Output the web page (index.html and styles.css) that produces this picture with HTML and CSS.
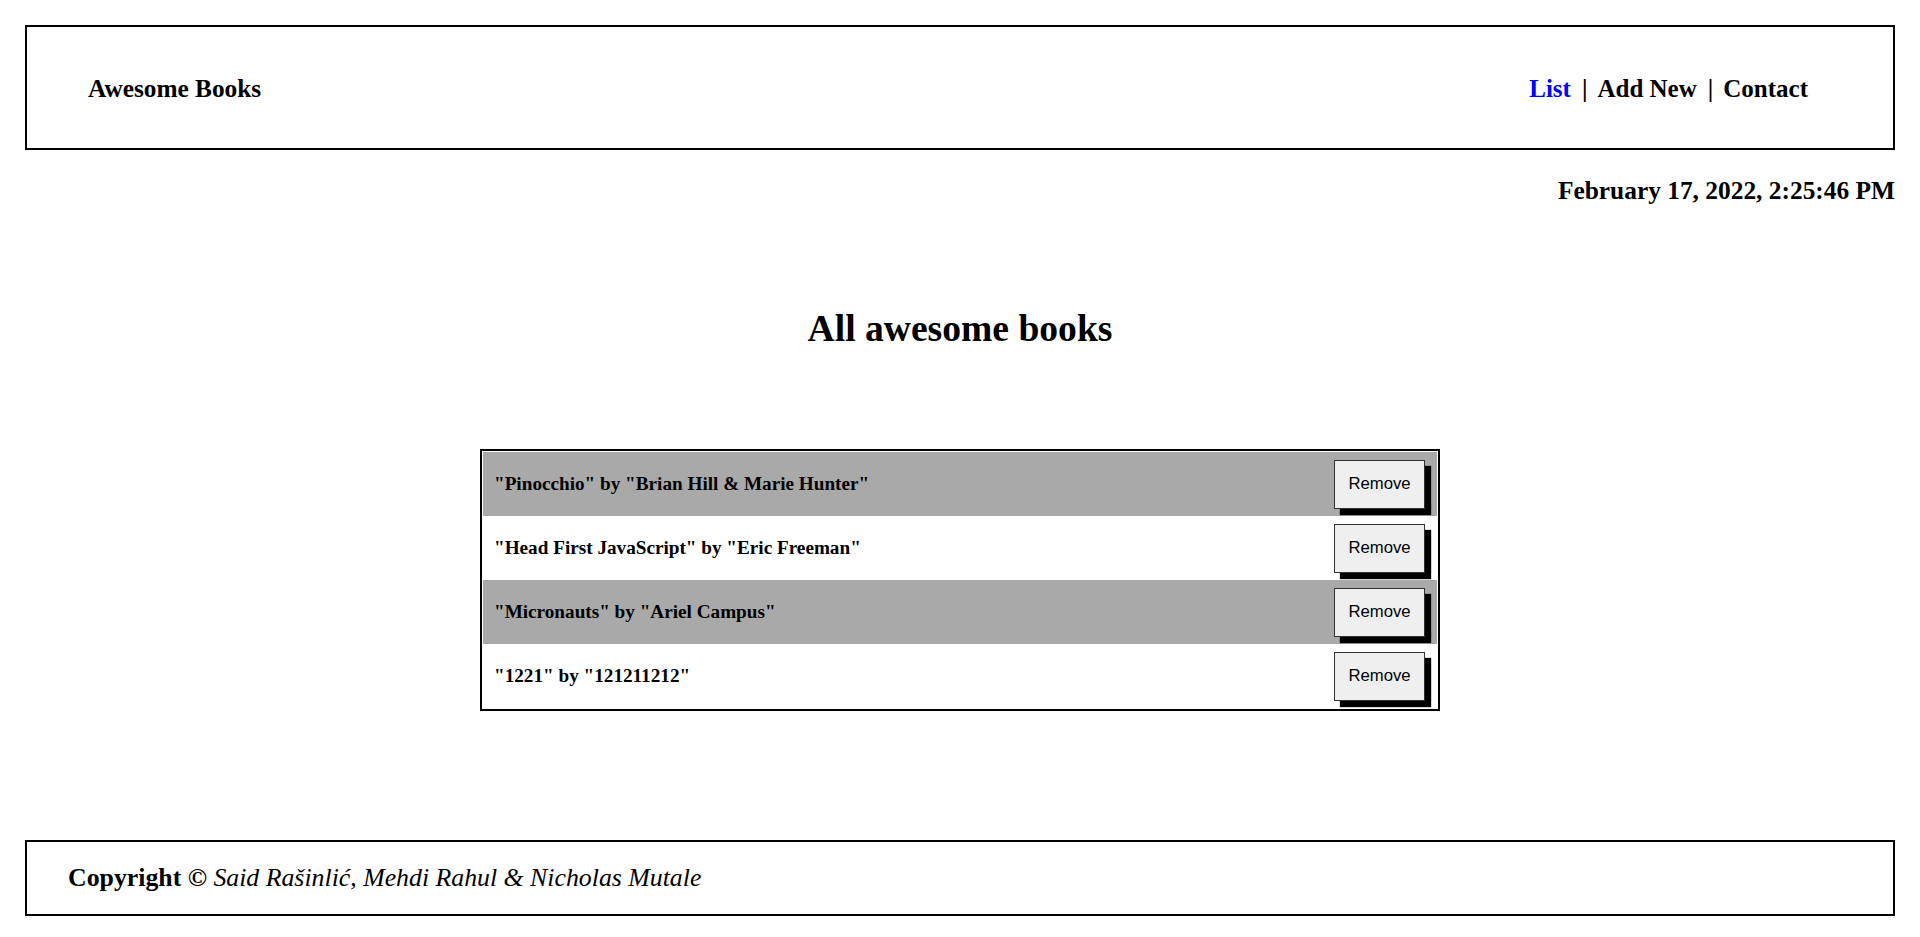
FILE: index.html
```html
<!DOCTYPE html>
<html lang="en">
<head>
<meta charset="utf-8">
<title>Awesome Books</title>
<link rel="stylesheet" href="styles.css">
</head>
<body>
<header class="top-bar">
  <div class="brand">Awesome Books</div>
  <nav class="nav">
    <a class="nav-link active" href="#">List</a>
    <span class="sep">|</span>
    <a class="nav-link" href="#">Add New</a>
    <span class="sep">|</span>
    <a class="nav-link" href="#">Contact</a>
  </nav>
</header>
<p class="date">February 17, 2022, 2:25:46 PM</p>
<main>
  <h1 class="title">All awesome books</h1>
  <ul class="book-list">
    <li class="book odd"><span class="book-text">"Pinocchio" by "Brian Hill &amp; Marie Hunter"</span><button class="remove">Remove</button></li>
    <li class="book"><span class="book-text">"Head First JavaScript" by "Eric Freeman"</span><button class="remove">Remove</button></li>
    <li class="book odd"><span class="book-text">"Micronauts" by "Ariel Campus"</span><button class="remove">Remove</button></li>
    <li class="book"><span class="book-text">"1221" by "121211212"</span><button class="remove">Remove</button></li>
  </ul>
</main>
<footer class="footer">
  <p class="copy"><strong>Copyright ©</strong> <em>Said Rašinlić, Mehdi Rahul &amp; Nicholas Mutale</em></p>
</footer>
</body>
</html>
```
FILE: styles.css
```css
* {
  box-sizing: border-box;
}

body {
  margin: 0;
  padding: 25px 25px 0;
  font-family: "Liberation Serif", "Times New Roman", serif;
  color: #000;
  background: #fff;
}

.top-bar {
  display: flex;
  justify-content: space-between;
  align-items: center;
  border: 2px solid #000;
  padding: 47px 85px 45px 61px;
  font-size: 25px;
  font-weight: bold;
  line-height: normal;
}

.brand {
  font-size: 25.3px;
}

.nav {
  display: flex;
  align-items: baseline;
}

.nav-link {
  color: #000;
  text-decoration: none;
}

.nav-link.active {
  color: #0000ff;
}

.sep {
  margin: 0 10px 0 11px;
}

.date {
  margin: 26px 0 0;
  text-align: right;
  font-size: 25.4px;
  font-weight: bold;
  line-height: normal;
}

.title {
  margin: 102px 0 0;
  text-align: center;
  font-size: 37.6px;
  font-weight: bold;
  line-height: normal;
}

.book-list {
  list-style: none;
  width: 960px;
  margin: 99px auto 0;
  padding: 1px;
  border: 2px solid #000;
}

.book {
  display: flex;
  align-items: center;
  justify-content: space-between;
  height: 64px;
  padding: 0 12px 0 11px;
  font-size: 19.2px;
  font-weight: bold;
}

.book.odd {
  background: #a9a9a9;
}

.remove {
  font-family: "Liberation Sans", Arial, sans-serif;
  font-size: 16.7px;
  color: #000;
  background: #efefef;
  border: 1px solid #333;
  border-radius: 0;
  width: 91px;
  height: 49px;
  padding: 0;
  box-shadow: 6px 6px 1px #000;
}

.footer {
  margin-top: 129px;
  border: 2px solid #000;
  padding: 21px 41px 21px;
}

.copy {
  margin: 0;
  font-size: 25.8px;
  line-height: normal;
}

.copy em {
  font-style: italic;
}
```
